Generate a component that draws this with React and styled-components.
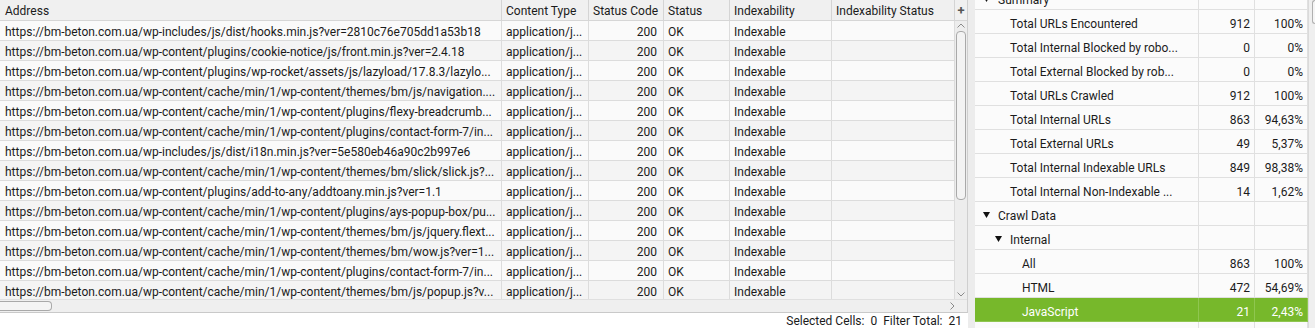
import React from "react";
import styled, { createGlobalStyle } from "styled-components";

const Global = createGlobalStyle`
  html, body { margin: 0; padding: 0; background: #ffffff; }
  body { font-family: Roboto, "Liberation Sans", Arial, sans-serif; font-size: 12px; color: #1b1b1b; }
  * { box-sizing: border-box; }
`;

const Page = styled.div`
  display: flex;
  width: 1315px;
  height: 328px;
  overflow: hidden;
  background: #fff;
`;

const LeftPane = styled.div`
  width: 968px;
  display: flex;
  flex-direction: column;
  flex-shrink: 0;
`;

const TableFrame = styled.div`
  display: flex;
  flex-direction: column;
  height: 313px;
  border-right: 1px solid #cfcfcf;
  border-bottom: 1px solid #c9c9c9;
  background: #f7f7f7;
`;

const cols = "502px 87px 75px 66px 102px 123px 12px";

const HeaderRow = styled.div`
  display: grid;
  grid-template-columns: ${cols};
  height: 21px;
  background: #f0f0f0;
  border-bottom: 1px solid #d6d6d6;
  flex-shrink: 0;
`;

const HeaderCell = styled.div`
  padding-left: ${(p) => (p.$first ? 5 : 4)}px;
  padding-top: 3px;
  line-height: 17px;
  border-right: 1px solid #d4d4d4;
  white-space: nowrap;
  overflow: hidden;
  color: #1b1b1b;
`;

const PlusCell = styled.div`
  display: flex;
  align-items: center;
  justify-content: center;
  font-weight: 700;
  font-size: 13px;
  color: #555;
  padding-top: 1px;
`;

const BodyArea = styled.div`
  display: flex;
  height: 278px;
  overflow: hidden;
`;

const Rows = styled.div`
  width: 955px;
  overflow: hidden;
`;

const Row = styled.div`
  display: grid;
  grid-template-columns: 502px 87px 75px 66px 102px 123px;
  height: 20px;
  background: ${(p) => (p.$alt ? "#f4f4f4" : "#fafafa")};
  border-bottom: 1px solid #dcdcdc;
`;

const Cell = styled.div`
  padding: 3px ${(p) => (p.$right ? 6 : 4)}px 0 ${(p) => (p.$first ? 5 : 4)}px;
  line-height: 16px;
  border-right: 1px solid #dcdcdc;
  white-space: nowrap;
  overflow: hidden;
  text-align: ${(p) => (p.$right ? "right" : "left")};
`;

const VScroll = styled.div`
  width: 12px;
  display: flex;
  flex-direction: column;
  align-items: center;
  background: #ededed;
  padding: 2px 0;
`;

const VThumb = styled.div`
  width: 10px;
  height: 169px;
  border: 1px solid #a9a9a9;
  border-radius: 4px;
  background: #f3f3f3;
  margin-top: 3px;
`;

const Spacer = styled.div`
  flex: 1;
`;

const Chevron = styled.svg`
  display: block;
  flex-shrink: 0;
`;

const HScroll = styled.div`
  height: 13px;
  display: flex;
  align-items: center;
  background: #efefef;
  border-top: 1px solid #e0e0e0;
  padding-right: 12px;
`;

const HThumb = styled.div`
  width: 52px;
  height: 10px;
  border: 1px solid #a9a9a9;
  border-left: none;
  border-radius: 0 4px 4px 0;
  background: #f4f4f4;
`;

const StatusBar = styled.div`
  flex: 1;
  display: flex;
  justify-content: flex-end;
  align-items: center;
  gap: 6px;
  padding-right: 6px;
  padding-top: 1px;
  background: #fff;
  white-space: nowrap;
`;

const Splitter = styled.div`
  width: 7px;
  flex-shrink: 0;
  background: #ececec;
`;

const RightPane = styled.div`
  flex: 1;
  display: flex;
  overflow: hidden;
  background: #fff;
`;

const Tree = styled.div`
  width: 333px;
  overflow: hidden;
  background: #fbfbfb;
`;

const TreeList = styled.div`
  margin-top: -14px;
`;

const TreeRow = styled.div`
  display: grid;
  grid-template-columns: 224px 56px 53px;
  height: 24px;
  background: ${(p) => (p.$selected ? "#77b82b" : "transparent")};
  color: ${(p) => (p.$selected ? "#ffffff" : "#1b1b1b")};
  border-bottom: 1px solid ${(p) => (p.$selected ? "#8fc650" : "#e0e0e0")};
`;

const TreeLabel = styled.div`
  display: flex;
  align-items: center;
  padding-left: ${(p) => p.$indent}px;
  padding-top: 5px;
  border-right: 1px solid ${(p) => (p.$selected ? "#8fc650" : "#e0e0e0")};
  white-space: nowrap;
  overflow: hidden;
`;

const TreeNum = styled.div`
  display: flex;
  align-items: center;
  justify-content: flex-end;
  padding-right: ${(p) => p.$pr}px;
  padding-top: 5px;
  border-right: 1px solid ${(p) => (p.$selected ? "#8fc650" : "#e0e0e0")};
  white-space: nowrap;
`;

const Caret = styled.svg`
  margin-right: 8px;
  margin-top: -3px;
  flex-shrink: 0;
`;

const RightScroll = styled.div`
  width: 7px;
  flex-shrink: 0;
  background: #efefef;
  border-left: 1px solid #dadada;
  padding-left: 3px;
`;

const RThumb = styled.div`
  height: 24px;
  border: 1px solid #b0b0b0;
  border-right: none;
  border-radius: 4px 0 0 4px;
  background: #f5f5f5;
`;

const urls = [
  "https://bm-beton.com.ua/wp-includes/js/dist/hooks.min.js?ver=2810c76e705dd1a53b18",
  "https://bm-beton.com.ua/wp-content/plugins/cookie-notice/js/front.min.js?ver=2.4.18",
  "https://bm-beton.com.ua/wp-content/plugins/wp-rocket/assets/js/lazyload/17.8.3/lazylo...",
  "https://bm-beton.com.ua/wp-content/cache/min/1/wp-content/themes/bm/js/navigation....",
  "https://bm-beton.com.ua/wp-content/cache/min/1/wp-content/plugins/flexy-breadcrumb...",
  "https://bm-beton.com.ua/wp-content/cache/min/1/wp-content/plugins/contact-form-7/in...",
  "https://bm-beton.com.ua/wp-includes/js/dist/i18n.min.js?ver=5e580eb46a90c2b997e6",
  "https://bm-beton.com.ua/wp-content/cache/min/1/wp-content/themes/bm/slick/slick.js?...",
  "https://bm-beton.com.ua/wp-content/plugins/add-to-any/addtoany.min.js?ver=1.1",
  "https://bm-beton.com.ua/wp-content/cache/min/1/wp-content/plugins/ays-popup-box/pu...",
  "https://bm-beton.com.ua/wp-content/cache/min/1/wp-content/themes/bm/js/jquery.flext...",
  "https://bm-beton.com.ua/wp-content/cache/min/1/wp-content/themes/bm/wow.js?ver=1...",
  "https://bm-beton.com.ua/wp-content/cache/min/1/wp-content/plugins/contact-form-7/in...",
  "https://bm-beton.com.ua/wp-content/cache/min/1/wp-content/themes/bm/js/popup.js?v...",
];

const tree = [
  { label: "Summary", level: 0, caret: true },
  { label: "Total URLs Encountered", level: 1, n: "912", p: "100%" },
  { label: "Total Internal Blocked by robo...", level: 1, n: "0", p: "0%" },
  { label: "Total External Blocked by rob...", level: 1, n: "0", p: "0%" },
  { label: "Total URLs Crawled", level: 1, n: "912", p: "100%" },
  { label: "Total Internal URLs", level: 1, n: "863", p: "94,63%" },
  { label: "Total External URLs", level: 1, n: "49", p: "5,37%" },
  { label: "Total Internal Indexable URLs", level: 1, n: "849", p: "98,38%" },
  { label: "Total Internal Non-Indexable ...", level: 1, n: "14", p: "1,62%" },
  { label: "Crawl Data", level: 0, caret: true },
  { label: "Internal", level: 1, caret: true },
  { label: "All", level: 2, n: "863", p: "100%" },
  { label: "HTML", level: 2, n: "472", p: "54,69%" },
  { label: "JavaScript", level: 2, n: "21", p: "2,43%", selected: true },
  { label: "", level: 2 },
];

function CaretIcon() {
  return (
    <Caret width="7" height="6" viewBox="0 0 7 6">
      <polygon points="0,0 7,0 3.5,6" fill="#111" />
    </Caret>
  );
}

export default function App() {
  return (
    <Page>
      <Global />
      <LeftPane>
        <TableFrame>
          <HeaderRow>
            <HeaderCell $first>Address</HeaderCell>
            <HeaderCell>Content Type</HeaderCell>
            <HeaderCell>Status Code</HeaderCell>
            <HeaderCell>Status</HeaderCell>
            <HeaderCell>Indexability</HeaderCell>
            <HeaderCell>Indexability Status</HeaderCell>
            <PlusCell>+</PlusCell>
          </HeaderRow>
          <BodyArea>
            <Rows>
              {urls.map((u, i) => (
                <Row key={i} $alt={i % 2 === 1}>
                  <Cell $first>{u}</Cell>
                  <Cell>application/j...</Cell>
                  <Cell $right>200</Cell>
                  <Cell>OK</Cell>
                  <Cell>Indexable</Cell>
                  <Cell />
                </Row>
              ))}
            </Rows>
            <VScroll>
              <Chevron width="8" height="5" viewBox="0 0 8 5">
                <polyline points="0.5,4.5 4,1 7.5,4.5" fill="none" stroke="#8a8a8a" strokeWidth="1" />
              </Chevron>
              <VThumb />
              <Spacer />
              <Chevron width="8" height="5" viewBox="0 0 8 5">
                <polyline points="0.5,0.5 4,4 7.5,0.5" fill="none" stroke="#8a8a8a" strokeWidth="1" />
              </Chevron>
            </VScroll>
          </BodyArea>
          <HScroll>
            <HThumb />
            <Spacer />
            <Chevron width="5" height="8" viewBox="0 0 5 8">
              <polyline points="0.5,0.5 4,4 0.5,7.5" fill="none" stroke="#8a8a8a" strokeWidth="1" />
            </Chevron>
          </HScroll>
        </TableFrame>
        <StatusBar>
          <span>Selected Cells:</span>
          <span>0</span>
          <span>Filter Total:</span>
          <span>21</span>
        </StatusBar>
      </LeftPane>
      <Splitter />
      <RightPane>
        <Tree>
          <TreeList>
            {tree.map((r, i) => (
              <TreeRow key={i} $selected={r.selected}>
                <TreeLabel $indent={r.caret ? 8 + r.level * 12 : 23 + r.level * 12} $selected={r.selected}>
                  {r.caret && <CaretIcon />}
                  {r.label}
                </TreeLabel>
                <TreeNum $pr={4} $selected={r.selected}>{r.n}</TreeNum>
                <TreeNum $pr={4} $selected={r.selected}>{r.p}</TreeNum>
              </TreeRow>
            ))}
          </TreeList>
        </Tree>
        <RightScroll>
          <RThumb />
        </RightScroll>
      </RightPane>
    </Page>
  );
}
